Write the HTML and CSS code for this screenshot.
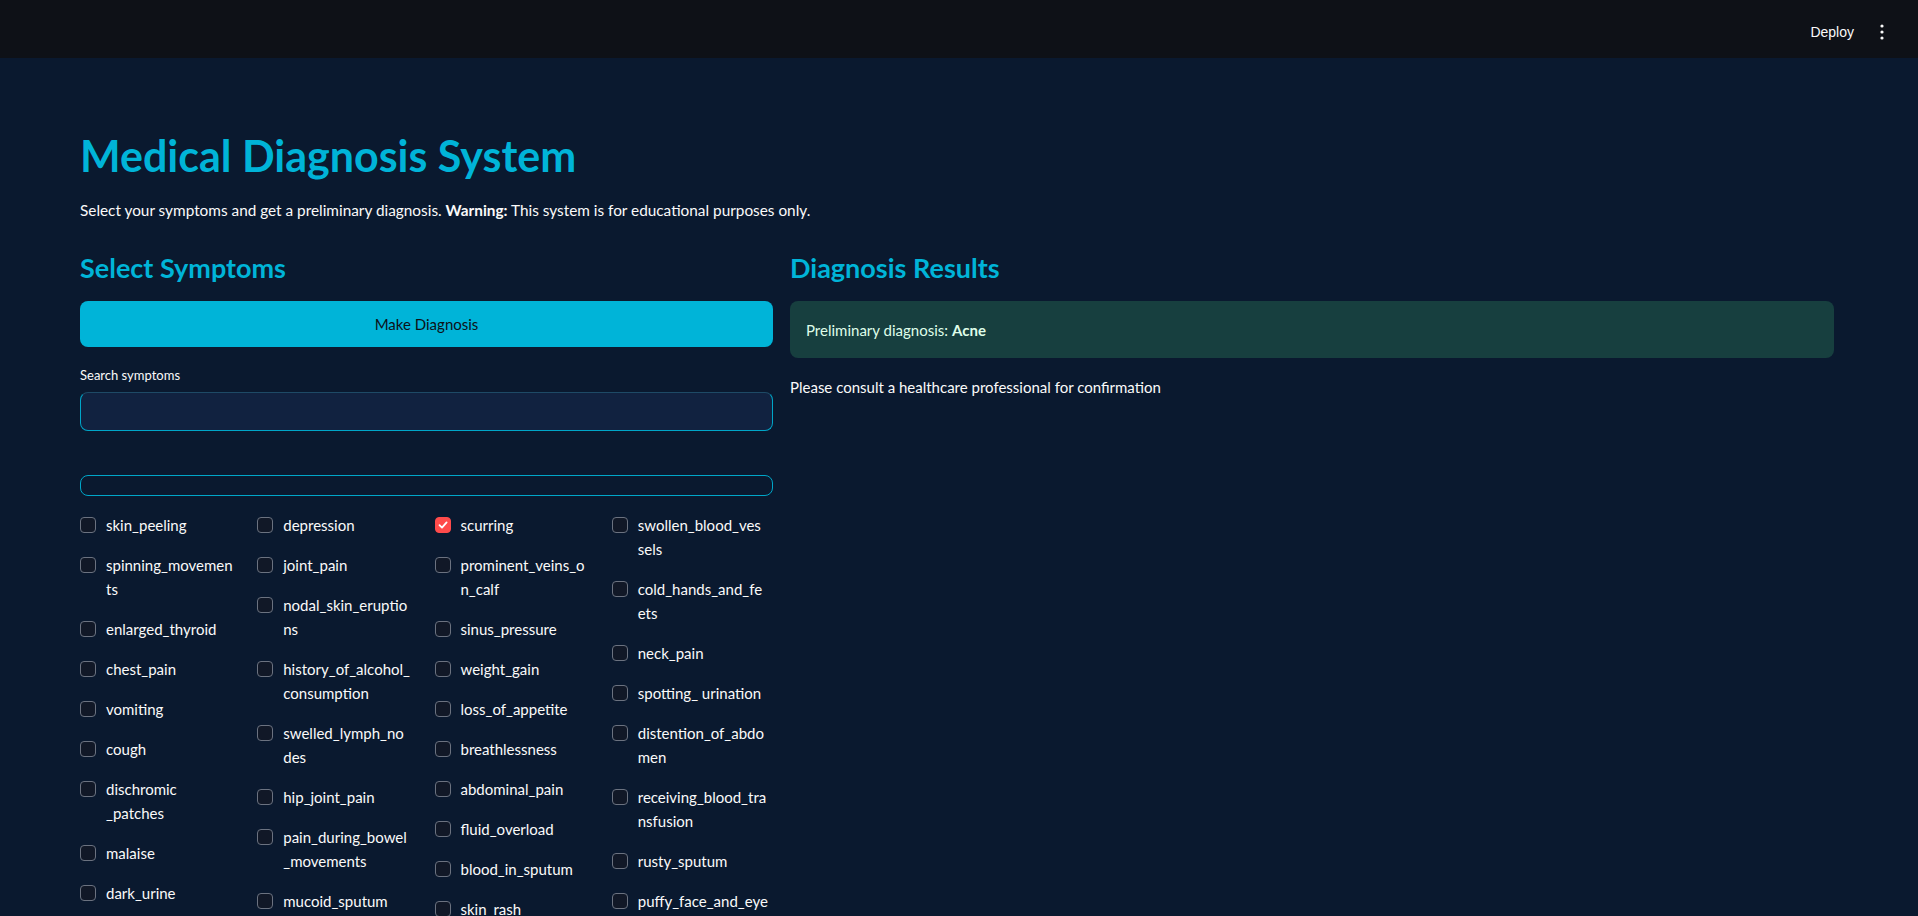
FILE: index.html
```html
<!DOCTYPE html>
<html lang="en">
<head>
<meta charset="utf-8">
<title>Medical Diagnosis System</title>
<link rel="stylesheet" href="styles.css">
</head>
<body>
<header class="topbar">
  <span class="deploy">Deploy</span>
  <svg class="kebab" width="4" height="16" viewBox="0 0 4 16"><circle cx="2" cy="2" r="1.6" fill="#fafafa"/><circle cx="2" cy="8" r="1.6" fill="#fafafa"/><circle cx="2" cy="14" r="1.6" fill="#fafafa"/></svg>
</header>
<main class="main">
  <h1 class="title">Medical Diagnosis System</h1>
  <p class="intro">Select your symptoms and get a preliminary diagnosis. <strong>Warning:</strong> This system is for educational purposes only.</p>
  <div class="cols">
    <section class="col-left">
      <h3 class="subhead">Select Symptoms</h3>
      <button class="btn-primary">Make Diagnosis</button>
      <label class="field-label">Search symptoms</label>
      <div class="text-input"></div>
      <div class="multi-box"></div>
      <div class="symptom-grid">
        <div class="symptom-col">
          <div class="cb"><span class="box"></span><span class="lbl">skin_peeling</span></div>
          <div class="cb"><span class="box"></span><span class="lbl">spinning_movemen<br>ts</span></div>
          <div class="cb"><span class="box"></span><span class="lbl">enlarged_thyroid</span></div>
          <div class="cb"><span class="box"></span><span class="lbl">chest_pain</span></div>
          <div class="cb"><span class="box"></span><span class="lbl">vomiting</span></div>
          <div class="cb"><span class="box"></span><span class="lbl">cough</span></div>
          <div class="cb"><span class="box"></span><span class="lbl">dischromic<br>_patches</span></div>
          <div class="cb"><span class="box"></span><span class="lbl">malaise</span></div>
          <div class="cb"><span class="box"></span><span class="lbl">dark_urine</span></div>
        </div>
        <div class="symptom-col">
          <div class="cb"><span class="box"></span><span class="lbl">depression</span></div>
          <div class="cb"><span class="box"></span><span class="lbl">joint_pain</span></div>
          <div class="cb"><span class="box"></span><span class="lbl">nodal_skin_eruptio<br>ns</span></div>
          <div class="cb"><span class="box"></span><span class="lbl">history_of_alcohol_<br>consumption</span></div>
          <div class="cb"><span class="box"></span><span class="lbl">swelled_lymph_no<br>des</span></div>
          <div class="cb"><span class="box"></span><span class="lbl">hip_joint_pain</span></div>
          <div class="cb"><span class="box"></span><span class="lbl">pain_during_bowel<br>_movements</span></div>
          <div class="cb"><span class="box"></span><span class="lbl">mucoid_sputum</span></div>
        </div>
        <div class="symptom-col">
          <div class="cb"><span class="box checked"><svg width="12" height="12" viewBox="0 0 12 12"><path d="M2.5 6.2 L5 8.6 L9.6 3.4" fill="none" stroke="#fff" stroke-width="1.8" stroke-linecap="round" stroke-linejoin="round"/></svg></span><span class="lbl">scurring</span></div>
          <div class="cb"><span class="box"></span><span class="lbl">prominent_veins_o<br>n_calf</span></div>
          <div class="cb"><span class="box"></span><span class="lbl">sinus_pressure</span></div>
          <div class="cb"><span class="box"></span><span class="lbl">weight_gain</span></div>
          <div class="cb"><span class="box"></span><span class="lbl">loss_of_appetite</span></div>
          <div class="cb"><span class="box"></span><span class="lbl">breathlessness</span></div>
          <div class="cb"><span class="box"></span><span class="lbl">abdominal_pain</span></div>
          <div class="cb"><span class="box"></span><span class="lbl">fluid_overload</span></div>
          <div class="cb"><span class="box"></span><span class="lbl">blood_in_sputum</span></div>
          <div class="cb"><span class="box"></span><span class="lbl">skin_rash</span></div>
        </div>
        <div class="symptom-col">
          <div class="cb"><span class="box"></span><span class="lbl">swollen_blood_ves<br>sels</span></div>
          <div class="cb"><span class="box"></span><span class="lbl">cold_hands_and_fe<br>ets</span></div>
          <div class="cb"><span class="box"></span><span class="lbl">neck_pain</span></div>
          <div class="cb"><span class="box"></span><span class="lbl">spotting_ urination</span></div>
          <div class="cb"><span class="box"></span><span class="lbl">distention_of_abdo<br>men</span></div>
          <div class="cb"><span class="box"></span><span class="lbl">receiving_blood_tra<br>nsfusion</span></div>
          <div class="cb"><span class="box"></span><span class="lbl">rusty_sputum</span></div>
          <div class="cb"><span class="box"></span><span class="lbl">puffy_face_and_eye</span></div>
        </div>
      </div>
    </section>
    <section class="col-right">
      <h3 class="subhead">Diagnosis Results</h3>
      <div class="alert-success">Preliminary diagnosis: <strong>Acne</strong></div>
      <p class="note">Please consult a healthcare professional for confirmation</p>
    </section>
  </div>
</main>
</body>
</html>
```

FILE: styles.css
```css
* { box-sizing: border-box; }
html, body { margin: 0; padding: 0; height: 100%; }
body {
  background: #0a192f;
  color: #fafafa;
  font-family: Lato, "Noto Sans", sans-serif;
  font-size: 16px;
  overflow: hidden;
}
.topbar {
  height: 58px;
  background: #0e1117;
  display: flex;
  align-items: center;
  justify-content: flex-end;
  padding: 10px 34px 4px 0;
  gap: 26px;
}
.deploy {
  font-family: "Liberation Sans", Arial, sans-serif;
  font-size: 14px;
  color: #fafafa;
}
.kebab { display: block; }
.main {
  padding: 72px 84px 0 80px;
}
.title {
  margin: 0;
  font-size: 43px;
  line-height: 52px;
  font-weight: 700;
  color: #00b4d8;
}
.intro {
  margin: 16px 0 0;
  font-size: 15.35px;
  line-height: 24px;
}
.intro strong { font-weight: 700; }
.cols {
  margin-top: 28px;
  display: grid;
  grid-template-columns: 693fr 1044fr;
  column-gap: 17px;
  align-items: start;
}
.subhead {
  margin: 0;
  font-size: 27px;
  line-height: 36px;
  font-weight: 700;
  color: #00b4d8;
}
.btn-primary {
  display: block;
  width: 100%;
  margin-top: 15px;
  height: 46px;
  border: none;
  border-radius: 8px;
  background: #00b4d8;
  color: #0e1117;
  font-family: Lato, "Noto Sans", sans-serif;
  font-size: 15px;
}
.field-label {
  display: block;
  margin-top: 18px;
  font-size: 13px;
  line-height: 20px;
}
.text-input {
  margin-top: 7px;
  height: 39px;
  border: 1px solid #00a6c8;
  border-top-color: #1e4a66;
  border-radius: 8px;
  background: #112240;
}
.multi-box {
  margin-top: 44px;
  height: 21px;
  border: 1px solid #00a6c8;
  border-radius: 8px;
}
.symptom-grid {
  margin-top: 17px;
  display: grid;
  grid-template-columns: repeat(4, 1fr);
  column-gap: 16px;
}
.symptom-col {
  display: flex;
  flex-direction: column;
  gap: 16px;
}
.cb {
  display: flex;
  align-items: flex-start;
  gap: 10px;
}
.box {
  flex: none;
  width: 16px;
  height: 16px;
  margin-top: 4px;
  border: 1px solid #6b7280;
  border-radius: 4px;
  background: #111827;
  display: flex;
  align-items: center;
  justify-content: center;
}
.box.checked {
  background: #ff4b4b;
  border-color: #ff4b4b;
}
.lbl {
  font-size: 15px;
  line-height: 24px;
  white-space: nowrap;
}
.alert-success {
  margin-top: 15px;
  height: 57px;
  border-radius: 8px;
  background: #173f3f;
  color: #dffde9;
  padding: 0 16px;
  display: flex;
  align-items: center;
  gap: 4px;
  font-size: 15px;
}
.alert-success strong { font-weight: 700; }
.note {
  margin: 17px 0 0;
  font-size: 15px;
  line-height: 24px;
}
```
